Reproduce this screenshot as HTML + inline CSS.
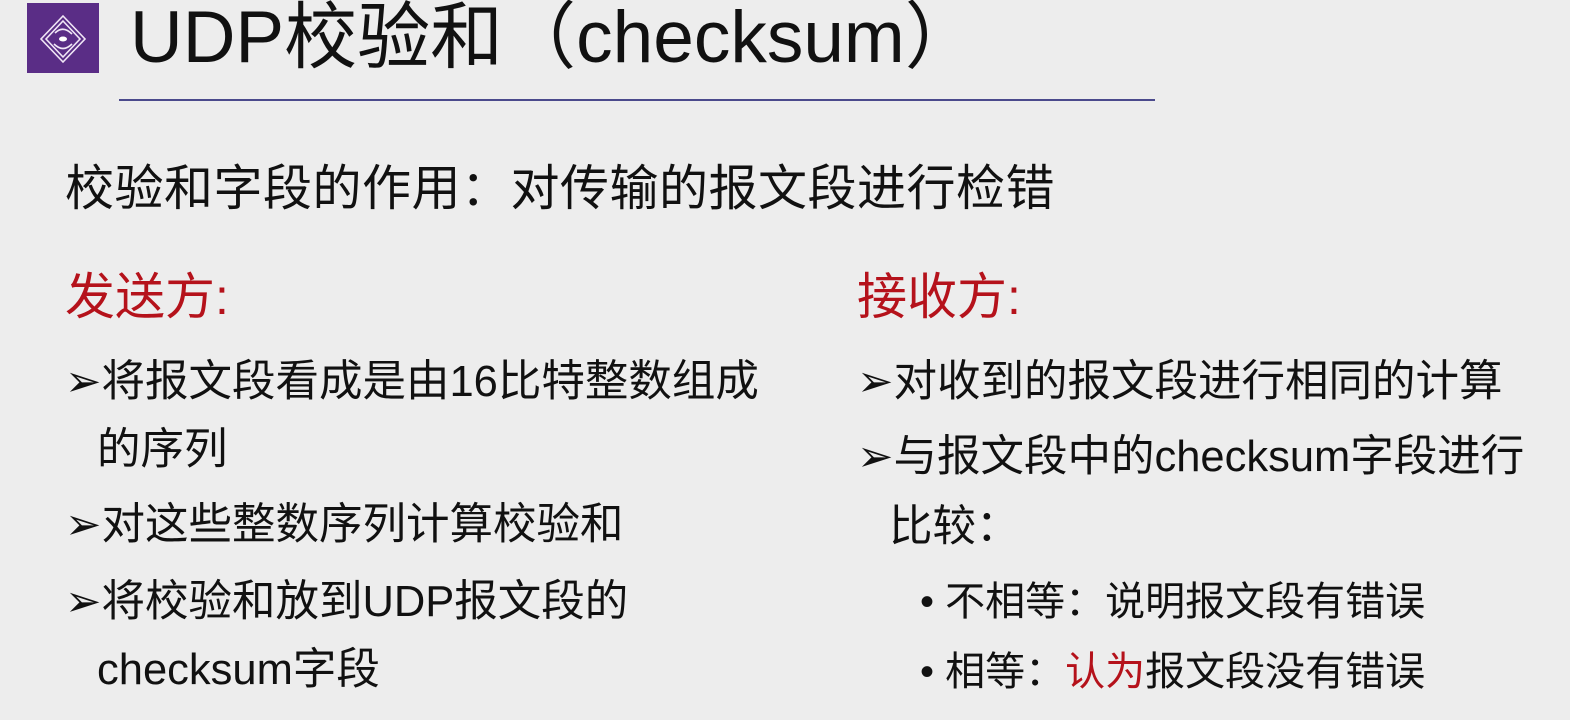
<!DOCTYPE html>
<html><head><meta charset="utf-8"><style>
body{margin:0;width:1570px;height:720px;background:#ededed;overflow:hidden;position:relative;font-family:"Liberation Sans","Noto Sans CJK SC",sans-serif;color:#111}
.a{position:absolute;white-space:nowrap;line-height:1}
.t{font-size:43.5px}
.r{color:#b5121b}
</style></head><body>
<div class="a" style="left:27px;top:3px;width:72px;height:70px;background:#5a2d86">
<svg width="72" height="70" viewBox="0 0 72 70"><g fill="none" stroke="#f0e6f6" stroke-width="1.6">
<path d="M36 13 L58 36 L36 59 L14 36 Z"/><path d="M36 18 L53 36 L36 54 L19 36 Z"/><path d="M28 30 Q36 22 45 31 M27 41 Q36 50 45 41"/></g><ellipse cx="36" cy="36" rx="4" ry="2.5" fill="#fff"/></svg></div>
<div class="a" style="left:130px;top:1px;font-size:73px">UDP校验和（checksum）</div>
<div style="position:absolute;left:119px;top:99px;width:1036px;height:2px;background:#4b4a8c"></div>
<div class="a" style="left:65px;top:165px;font-size:49px;letter-spacing:0.5px">校验和字段的作用：对传输的报文段进行检错</div>
<div class="a r" style="left:65px;top:272px;font-size:50px">发送方:</div>
<div class="a r" style="left:857px;top:272px;font-size:50px">接收方:</div>
<div class="a t" style="left:65px;top:361px">➢将报文段看成是由16比特整数组成</div>
<div class="a t" style="left:97px;top:429px">的序列</div>
<div class="a t" style="left:65px;top:504px">➢对这些整数序列计算校验和</div>
<div class="a t" style="left:65px;top:581px">➢将校验和放到UDP报文段的</div>
<div class="a t" style="left:97px;top:649px">checksum字段</div>
<div class="a t" style="left:857px;top:361px">➢对收到的报文段进行相同的计算</div>
<div class="a t" style="left:857px;top:436px">➢与报文段中的checksum字段进行</div>
<div class="a t" style="left:889px;top:506px">比较：</div>
<div class="a" style="left:920px;top:582px;font-size:40px">• 不相等：说明报文段有错误</div>
<div class="a" style="left:920px;top:652px;font-size:40px">• 相等：<span class="r">认为</span>报文段没有错误</div>
</body></html>
